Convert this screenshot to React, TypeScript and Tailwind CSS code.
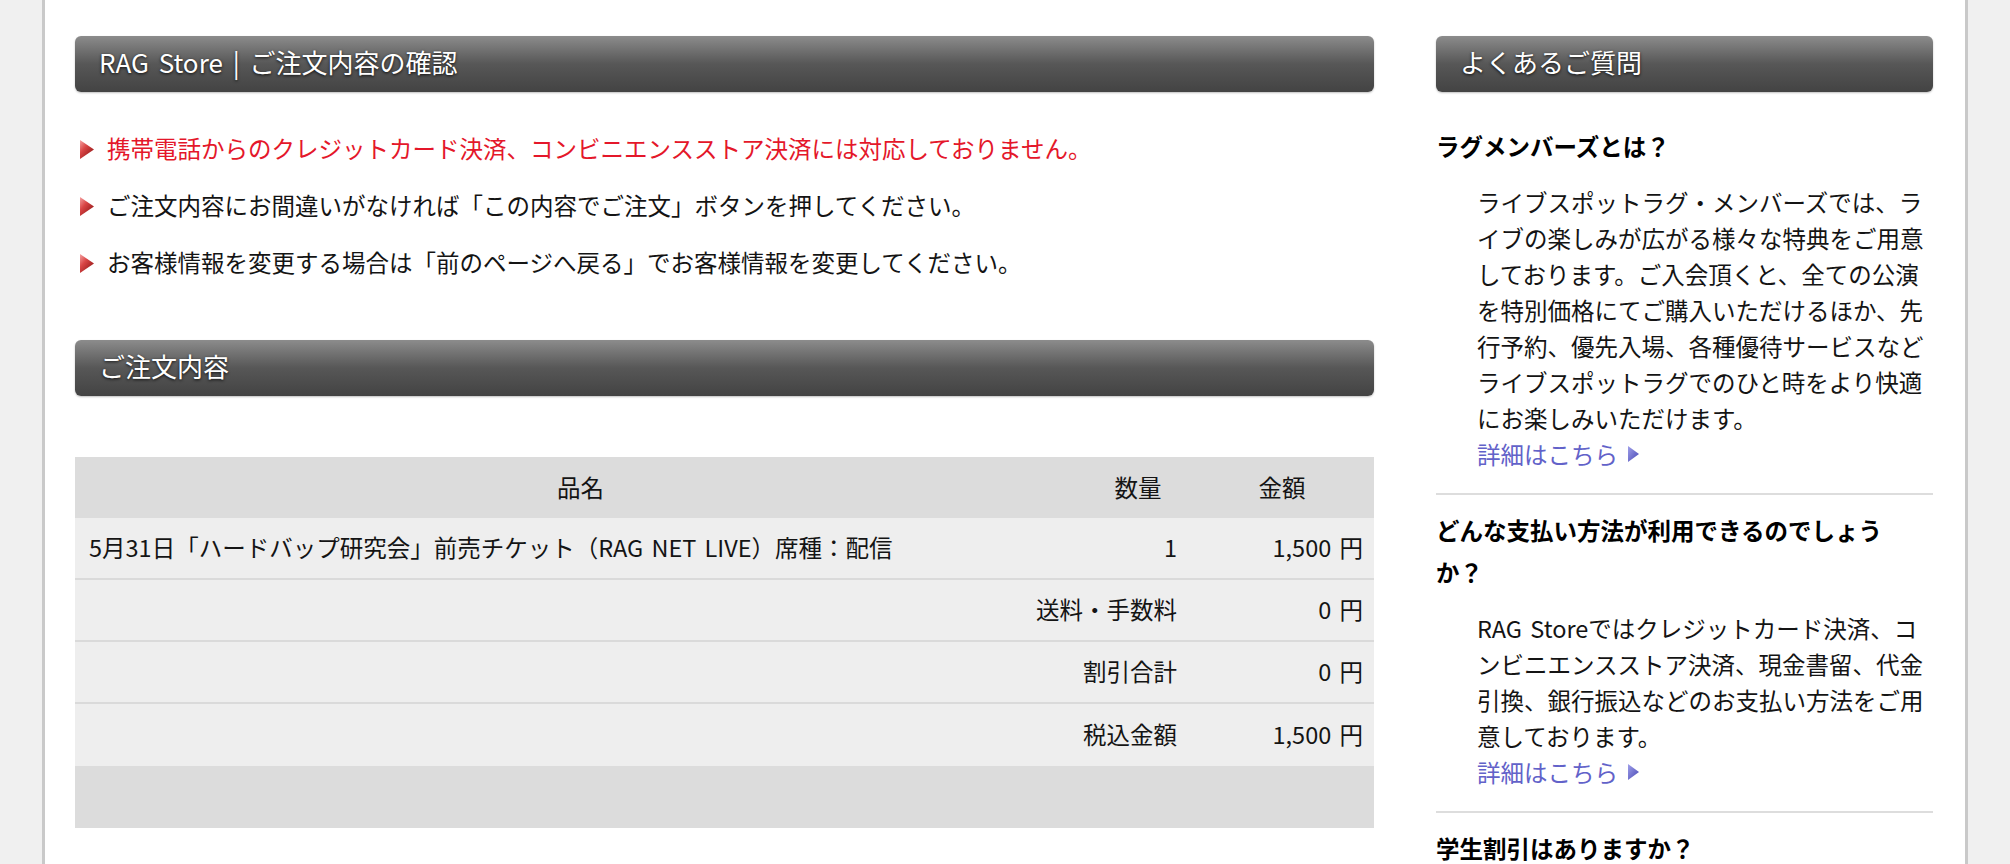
import React from "react";

type Line = {
  text: string;
  alert?: boolean;
};

type Faq = {
  title: string[];
  body: string[];
};

const NOTICES: Line[] = [
  {
    text: "携帯電話からのクレジットカード決済、コンビニエンスストア決済には対応しておりません。",
    alert: true,
  },
  { text: "ご注文内容にお間違いがなければ「この内容でご注文」ボタンを押してください。" },
  { text: "お客様情報を変更する場合は「前のページへ戻る」でお客様情報を変更してください。" },
];

const FAQS: Faq[] = [
  {
    title: ["ラグメンバーズとは？"],
    body: [
      "ライブスポットラグ・メンバーズでは、ラ",
      "イブの楽しみが広がる様々な特典をご用意",
      "しております。ご入会頂くと、全ての公演",
      "を特別価格にてご購入いただけるほか、先",
      "行予約、優先入場、各種優待サービスなど",
      "ライブスポットラグでのひと時をより快適",
      "にお楽しみいただけます。",
    ],
  },
  {
    title: ["どんな支払い方法が利用できるのでしょう", "か？"],
    body: [
      "RAG Storeではクレジットカード決済、コ",
      "ンビニエンスストア決済、現金書留、代金",
      "引換、銀行振込などのお支払い方法をご用",
      "意しております。",
    ],
  },
  {
    title: ["学生割引はありますか？"],
    body: [],
  },
];

const SUMMARY = [
  { label: "送料・手数料", value: "0 円" },
  { label: "割引合計", value: "0 円" },
  { label: "税込金額", value: "1,500 円" },
];

function SectionHeader({ children }: { children: React.ReactNode }) {
  return (
    <div className="flex h-[56px] items-center rounded-[6px] bg-linear-to-b from-[#8c8c8c] via-[#575757] to-[#434343] pb-[5px] pl-[24px] text-[26px] text-white shadow-[0_1px_2px_rgba(0,0,0,0.25)] [text-shadow:0_1px_3px_rgba(0,0,0,0.85)] [word-spacing:4px]">
      {children}
    </div>
  );
}

// small bevelled triangle used in front of each notice
function RedArrow() {
  return (
    <svg width="14" height="19" viewBox="0 0 14 19" className="shrink-0">
      <defs>
        <linearGradient id="red-arrow" x1="0" y1="0" x2="0.9" y2="1">
          <stop offset="0" stopColor="#f5a3a3" />
          <stop offset="0.4" stopColor="#d94545" />
          <stop offset="1" stopColor="#861010" />
        </linearGradient>
      </defs>
      <polygon points="0,0 14,9.5 0,19" fill="url(#red-arrow)" />
    </svg>
  );
}

function BlueArrow() {
  return (
    <svg width="11" height="16" viewBox="0 0 11 16" className="ml-[10px] shrink-0">
      <defs>
        <linearGradient id="blue-arrow" x1="0" y1="0" x2="1" y2="1">
          <stop offset="0" stopColor="#a0a0ea" />
          <stop offset="1" stopColor="#4646b4" />
        </linearGradient>
      </defs>
      <polygon points="0,0 11,8 0,16" fill="url(#blue-arrow)" />
    </svg>
  );
}

export default function App() {
  return (
    <div className="flex min-h-[864px] justify-center bg-[#f0f0f0] font-['Noto_Sans_CJK_JP',sans-serif] text-[23.5px] text-[#141414] [word-spacing:3px]">
      <div className="flex w-[1926px] gap-[62px] border-x-[3px] border-[#c9c9c9] bg-white pl-[30px] pr-[32px] pt-[36px]">
        <main className="w-[1299px] shrink-0">
          <SectionHeader>RAG Store | ご注文内容の確認</SectionHeader>

          <ul className="mt-[39px] flex flex-col gap-[21px] pl-[5px]">
            {NOTICES.map((notice) => (
              <li key={notice.text} className="flex h-[36px] items-center gap-[13px]">
                <RedArrow />
                <span className={notice.alert ? "text-[#e4172a]" : undefined}>
                  {notice.text}
                </span>
              </li>
            ))}
          </ul>

          <div className="mt-[59px]">
            <SectionHeader>ご注文内容</SectionHeader>
          </div>

          <div className="mt-[61px] grid grid-cols-[1011px_104px_184px]">
            <div className="flex h-[61px] items-center justify-center bg-[#dcdcdc]">品名</div>
            <div className="flex h-[61px] items-center justify-center bg-[#dcdcdc]">数量</div>
            <div className="flex h-[61px] items-center justify-center bg-[#dcdcdc]">金額</div>

            <div className="flex h-[62px] items-center border-b-2 border-[#dadada] bg-[#eeeeee] pl-[14px]">
              5月31日「ハードバップ研究会」前売チケット（RAG NET LIVE）席種：配信
            </div>
            <div className="flex h-[62px] items-center justify-end border-b-2 border-[#dadada] bg-[#eeeeee] pr-[13px]">
              1
            </div>
            <div className="flex h-[62px] items-center justify-end border-b-2 border-[#dadada] bg-[#eeeeee] pr-[11px]">
              1,500 円
            </div>

            {SUMMARY.map((row, index) => (
              <React.Fragment key={row.label}>
                <div
                  className={`col-span-2 flex h-[62px] items-center justify-end bg-[#eeeeee] pr-[13px] ${
                    index < SUMMARY.length - 1 ? "border-b-2 border-[#dadada]" : ""
                  }`}
                >
                  {row.label}
                </div>
                <div
                  className={`flex h-[62px] items-center justify-end bg-[#eeeeee] pr-[11px] ${
                    index < SUMMARY.length - 1 ? "border-b-2 border-[#dadada]" : ""
                  }`}
                >
                  {row.value}
                </div>
              </React.Fragment>
            ))}

            <div className="col-span-3 h-[62px] bg-[#dcdcdc]" />
          </div>
        </main>

        <aside className="w-[497px] shrink-0">
          <SectionHeader>よくあるご質問</SectionHeader>

          <div className="mt-[19px]">
            {FAQS.map((faq) => (
              <div
                key={faq.title.join("")}
                className="border-b-2 border-[#dddddd] pb-[21px] pt-[14px] last:border-b-0"
              >
                <h3 className="text-[23.5px] font-bold leading-[42px] text-black">
                  {faq.title.map((line, i) => (
                    <React.Fragment key={line}>
                      {i > 0 ? <br /> : null}
                      {line}
                    </React.Fragment>
                  ))}
                </h3>
                {faq.body.length > 0 ? (
                  <div className="mt-[17px] pl-[41px] leading-[36px]">
                    <p>
                      {faq.body.map((line, i) => (
                        <React.Fragment key={line}>
                          {i > 0 ? <br /> : null}
                          {line}
                        </React.Fragment>
                      ))}
                    </p>
                    <a href="#" className="flex h-[36px] items-center text-[#6262c9]">
                      詳細はこちら
                      <BlueArrow />
                    </a>
                  </div>
                ) : null}
              </div>
            ))}
          </div>
        </aside>
      </div>
    </div>
  );
}
